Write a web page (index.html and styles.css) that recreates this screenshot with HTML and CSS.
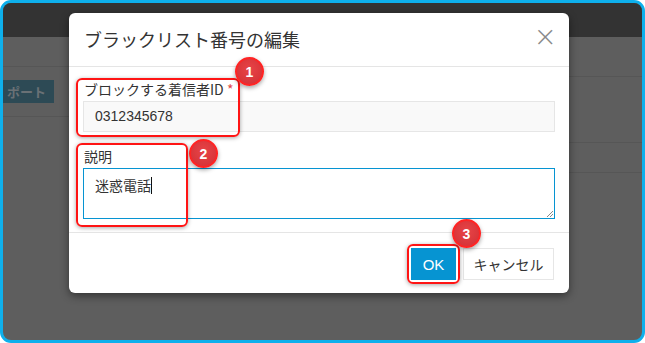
FILE: index.html
```
<!DOCTYPE html>
<html lang="ja">
<head>
    <meta charset="UTF-8">
    <meta name="viewport" content="width=device-width, initial-scale=1.0">
    <title>ブラックリスト番号の編集</title>
    <link rel="stylesheet" href="styles.css">
</head>
<body>
    <div class="frame">
        <div class="topbar"></div>
        <div class="page">
            <div class="side-left">
                <div class="row row-a"></div>
                <div class="row row-b">
                    <button class="import-btn">ポート</button>
                </div>
            </div>
            <div class="side-right">
                <div class="row row-c"></div>
                <div class="row row-d"></div>
                <div class="row row-e"></div>
            </div>
        </div>

        <!-- モーダル -->
        <div class="modal">
            <div class="modal-header">
                <h2>ブラックリスト番号の編集</h2>
                <span class="close">&times;</span>
            </div>
            <div class="modal-body">
                <label class="field-label">ブロックする着信者ID <span class="req">*</span></label>
                <div class="input">0312345678</div>
                <label class="field-label second">説明</label>
                <div class="textarea">迷惑電話<span class="caret"></span>
                    <svg class="grip" width="7" height="7" viewBox="0 0 7 7"><path d="M7 1L1 7M7 4L4 7" stroke="#888" stroke-width="1"/></svg>
                </div>
            </div>
            <div class="modal-footer">
                <button class="btn btn-ok">OK</button>
                <button class="btn btn-cancel">キャンセル</button>
            </div>
        </div>

        <!-- 注釈 -->
        <div class="mark box1"></div>
        <div class="mark box2"></div>
        <div class="mark box3"></div>
        <div class="badge badge1">1</div>
        <div class="badge badge2">2</div>
        <div class="badge badge3">3</div>
    </div>
</body>
</html>
```

FILE: styles.css
```
:root {
    --frame-color: #0eb0ec;
    --blue: #0694d2;
    --text-color: #333333;
    --mark-red: #ff1414;
}

* {
    margin: 0;
    padding: 0;
    box-sizing: border-box;
}

body {
    font-family: 'Liberation Sans', 'Noto Sans CJK JP', sans-serif;
    background: #ffffff;
    color: var(--text-color);
}

.frame {
    width: 645px;
    height: 343px;
    border: 3px solid var(--frame-color);
    border-radius: 11px;
    background: #5e5e5e;
    overflow: hidden;
    position: relative;
    display: flex;
    flex-direction: column;
}

.topbar {
    height: 34px;
    background: #333333;
    flex-shrink: 0;
}

.page {
    flex: 1;
    display: flex;
    justify-content: space-between;
}

.side-left {
    width: 80px;
}

.side-right {
    width: 90px;
}

.row {
    border-bottom: 1px solid #565656;
}

.row-a { height: 30px; }
.row-b { height: 50px; padding-top: 13px; }
.row-c { height: 40px; }
.row-d { height: 66px; }
.row-e { height: 30px; }

.import-btn {
    height: 23px;
    width: 51px;
    border: none;
    background: #2d4a55;
    color: #6a7175;
    font-family: 'Noto Sans CJK JP', sans-serif;
    font-size: 13px;
    font-weight: 700;
    text-align: left;
    padding-left: 4px;
}

.modal {
    position: absolute;
    left: 66px;
    top: 10px;
    width: 500px;
    height: 280px;
    background: #ffffff;
    border-radius: 6px;
    box-shadow: 0 3px 9px rgba(0,0,0,0.45);
    display: flex;
    flex-direction: column;
}

.modal-header {
    height: 54px;
    border-bottom: 1px solid #e5e5e5;
    display: flex;
    align-items: center;
    justify-content: space-between;
    padding: 0 12px 2px 15px;
}

.modal-header h2 {
    font-family: 'Noto Sans CJK JP', sans-serif;
    font-size: 18px;
    font-weight: 400;
    color: #333333;
}

.close {
    font-family: 'DejaVu Sans', sans-serif;
    font-size: 28px;
    font-weight: 300;
    color: #8a8a8a;
    line-height: 1;
    margin-top: -4px;
}

.modal-body {
    padding: 12px 14px 0 14px;
    height: 166px;
    border-bottom: 1px solid #e5e5e5;
}

.field-label {
    display: block;
    font-family: 'Noto Sans CJK JP', sans-serif;
    font-size: 14px;
    line-height: 20px;
    margin-bottom: 2px;
    padding-left: 1px;
}

.field-label.second {
    margin-top: 14px;
}

.req {
    color: #e04848;
}

.input {
    height: 31px;
    border: 1px solid #e6e6e6;
    background: #f9f9f9;
    font-size: 14px;
    line-height: 29px;
    padding-left: 11px;
}

.textarea {
    height: 51px;
    border: 1px solid var(--blue);
    background: #ffffff;
    font-family: 'Noto Sans CJK JP', sans-serif;
    font-size: 14px;
    line-height: 20px;
    padding: 6px 11px;
    position: relative;
}

.caret {
    display: inline-block;
    width: 1px;
    height: 17px;
    background: #111111;
    vertical-align: -3px;
}

.grip {
    position: absolute;
    right: 1px;
    bottom: 1px;
}

.modal-footer {
    flex: 1;
    display: flex;
    justify-content: flex-end;
    gap: 7px;
    padding: 15px 15px 0 0;
}

.btn {
    height: 32px;
    font-size: 14px;
    font-family: 'Liberation Sans', 'Noto Sans CJK JP', sans-serif;
    cursor: pointer;
}

.btn-ok {
    width: 45px;
    border: none;
    background: var(--blue);
    color: #ffffff;
    font-size: 15px;
}

.btn-cancel {
    width: 91px;
    border: 1px solid #e6e6e6;
    background: #ffffff;
    color: #333333;
    font-family: 'Noto Sans CJK JP', sans-serif;
}

/* 注釈 */
.mark {
    position: absolute;
    border: 2px solid var(--mark-red);
    border-radius: 6px;
    box-shadow: 0 1px 4px rgba(0,0,0,0.35);
}

.box1 { left: 73px; top: 75px; width: 164px; height: 59px; }
.box2 { left: 73px; top: 140px; width: 112px; height: 84px; }
.box3 { left: 404px; top: 241px; width: 53px; height: 40px; }

.badge {
    position: absolute;
    width: 29px;
    height: 29px;
    border-radius: 50%;
    background: radial-gradient(circle at 50% 40%, #e84447 0%, #d8353a 70%);
    border: 2px solid #ff2424;
    box-shadow: 0 2px 4px rgba(0,0,0,0.35);
    color: #ffffff;
    font-family: 'Liberation Sans', sans-serif;
    font-weight: 700;
    font-size: 14px;
    display: flex;
    align-items: center;
    justify-content: center;
}

.badge1 { left: 232px; top: 54px; }
.badge2 { left: 186px; top: 136px; }
.badge3 { left: 449px; top: 216px; }
```
